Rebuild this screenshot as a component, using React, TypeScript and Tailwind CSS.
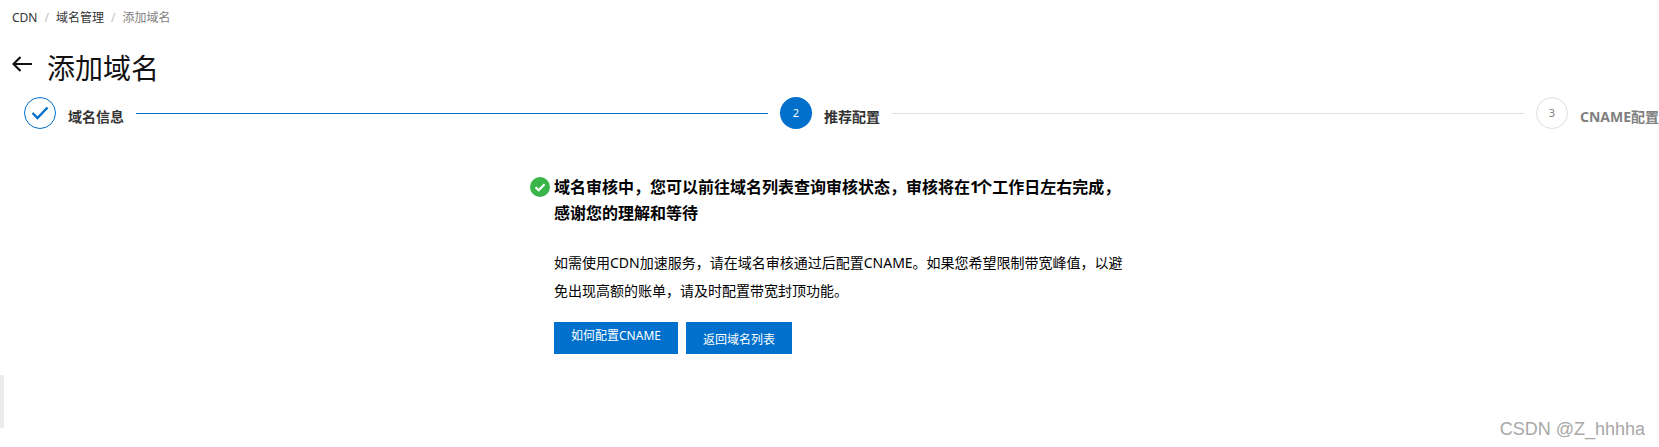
const font = { fontFamily: '"Noto Sans", "Noto Sans CJK SC", sans-serif' }

function StepLine({ done }: { done?: boolean }) {
  return <div className={`h-px flex-1 mx-3 ${done ? 'bg-[#0070cc]' : 'bg-[#dedede]'}`} />
}

function Steps() {
  return (
    <div className="flex items-center h-8 pl-6">
      <div className="flex items-center flex-1 min-w-0">
        <div className="w-8 h-8 rounded-full border border-[#0070cc] flex items-center justify-center flex-none">
          <svg width="18" height="14" viewBox="0 0 18 14" fill="none" stroke="#0070cc" strokeWidth="2.4">
            <path d="M1.5 7 6.5 12 16.5 1.5" />
          </svg>
        </div>
        <span className="ml-3 text-sm font-bold text-[#333] leading-8 mt-2 whitespace-nowrap">域名信息</span>
        <StepLine done />
      </div>
      <div className="flex items-center flex-1 min-w-0">
        <div className="w-8 h-8 rounded-full bg-[#0070cc] text-white text-[11px] flex items-center justify-center flex-none">2</div>
        <span className="ml-3 text-sm font-bold text-[#333] leading-8 mt-2 whitespace-nowrap">推荐配置</span>
        <StepLine />
      </div>
      <div className="flex items-center w-[123px] flex-none">
        <div className="w-8 h-8 rounded-full border border-[#dedede] text-[#808080] text-[11px] flex items-center justify-center flex-none">3</div>
        <span className="ml-3 text-sm font-bold text-[#808080] leading-8 mt-2 whitespace-nowrap">CNAME配置</span>
      </div>
    </div>
  )
}

export default function App() {
  return (
    <div className="relative h-[447px] overflow-hidden bg-white" style={font}>
      <nav className="flex items-center h-3 mt-3 pl-3 text-xs leading-3">
        <span className="text-[#333]">CDN</span>
        <span className="mx-[7px] text-[#c1c1c1]">/</span>
        <span className="text-[#333]">域名管理</span>
        <span className="mx-[7px] text-[#c1c1c1]">/</span>
        <span className="text-[#808080]">添加域名</span>
      </nav>

      <header className="flex items-center h-10 mt-6 pl-3">
        <svg width="20" height="16" viewBox="0 0 20 16" fill="none" stroke="#111" strokeWidth="2.2" className="mb-2 flex-none">
          <path d="M20 8H1.5M8.5 1 1.5 8l7 7" />
        </svg>
        <h1 className="ml-[15px] text-[28px] leading-10 font-normal text-[#111]">添加域名</h1>
      </header>

      <div className="mt-[9px]">
        <Steps />
      </div>

      <main className="mt-[45px] ml-[530px]">
        <div className="flex items-start">
          <svg width="20" height="20" viewBox="0 0 20 20" className="mt-[3px] flex-none">
            <circle cx="10" cy="10" r="10" fill="#39b54a" />
            <path d="M5.5 10.2 8.6 13.2 14.6 7.2" fill="none" stroke="#fff" strokeWidth="2.2" />
          </svg>
          <h2 className="ml-1 text-base leading-[26px] font-bold text-black whitespace-nowrap">
            域名审核中，您可以前往域名列表查询审核状态，审核将在<span className="tracking-[-3px]">1</span>个工作日左右完成，
            <br />
            感谢您的理解和等待
          </h2>
        </div>
        <div className="ml-6 mt-[23px]">
          <p className="text-sm leading-7 text-black whitespace-nowrap">
            如需使用CDN加速服务，请在域名审核通过后配置CNAME。如果您希望限制带宽峰值，以避
            <br />
            免出现高额的账单，请及时配置带宽封顶功能。
          </p>
          <div className="flex gap-2 mt-[17px]">
            <button className="w-[124px] h-8 pb-1 bg-[#0070cc] text-white text-xs">如何配置CNAME</button>
            <button className="w-[106px] h-8 pt-1 bg-[#0070cc] text-white text-xs">返回域名列表</button>
          </div>
        </div>
      </main>

      <div className="absolute left-0 top-[375px] w-1 h-[53px] bg-[#ececec]" />
      <div className="absolute right-[14px] top-[417px] text-lg leading-6 text-[#a8a8a8]" style={{ fontFamily: '"Liberation Sans", sans-serif' }}>
        CSDN @Z_hhhha
      </div>
    </div>
  )
}
